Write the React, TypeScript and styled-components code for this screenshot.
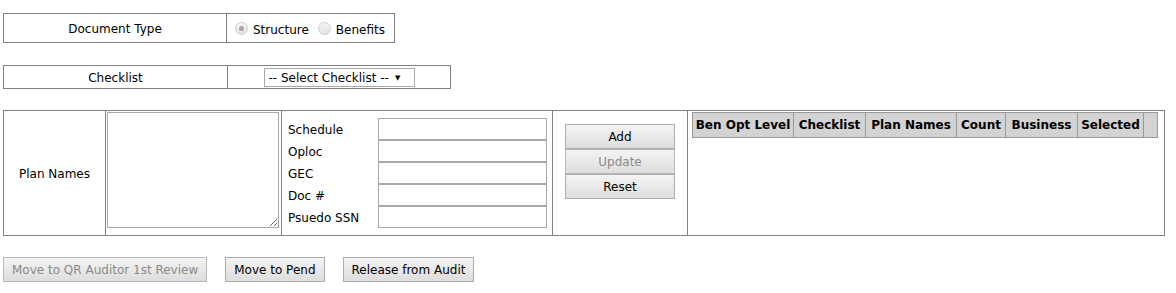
import styled, { createGlobalStyle } from "styled-components";

const GlobalStyle = createGlobalStyle`
  html, body {
    margin: 0;
    padding: 0;
    background: #fff;
  }

  body {
    font-family: "DejaVu Sans", Verdana, sans-serif;
    font-size: 12px;
    color: #000;
  }

  * {
    box-sizing: border-box;
  }
`;

const headers = [
  { label: "Ben Opt Level", width: 101 },
  { label: "Checklist", width: 72 },
  { label: "Plan Names", width: 91 },
  { label: "Count", width: 49 },
  { label: "Business", width: 72 },
  { label: "Selected", width: 66 },
  { label: "", width: 14 },
];

const fields = ["Schedule", "Oploc", "GEC", "Doc #", "Psuedo SSN"];

const App = () => (
  <>
    <GlobalStyle />
    <Page>
      <FormTable $cols="223px 1fr" $width={392} $height={30} $gap={22}>
        <LabelCell $shift={2}>Document Type</LabelCell>
        <RadioCell>
          <RadioOption>
            <Radio $checked />
            <RadioText>Structure</RadioText>
          </RadioOption>
          <RadioOption>
            <Radio />
            <RadioText>Benefits</RadioText>
          </RadioOption>
        </RadioCell>
      </FormTable>

      <FormTable $cols="224px 1fr" $width={448} $height={24} $gap={21}>
        <LabelCell $shift={1}>Checklist</LabelCell>
        <CenterCell>
          <SelectWrap>
            <Select defaultValue="">
              <option value="">-- Select Checklist --</option>
            </Select>
            <Arrow>▼</Arrow>
          </SelectWrap>
        </CenterCell>
      </FormTable>

      <FormTable
        $cols="102px 176px 271px 135px 1fr"
        $width={1162}
        $height={126}
        $gap={21}
      >
        <LabelCell $shift={1}>Plan Names</LabelCell>
        <TextareaCell>
          <PlanNames />
        </TextareaCell>
        <FieldsCell>
          <FieldGrid>
            {fields.map((f) => (
              <FieldRow key={f}>
                <FieldLabel>{f}</FieldLabel>
                <Input type="text" />
              </FieldRow>
            ))}
          </FieldGrid>
        </FieldsCell>
        <ButtonCell>
          <StackButton>Add</StackButton>
          <StackButton disabled>Update</StackButton>
          <StackButton>Reset</StackButton>
        </ButtonCell>
        <GridCell>
          <HeaderRow>
            {headers.map((h, i) => (
              <HeadCell key={i} $width={h.width}>
                {h.label}
              </HeadCell>
            ))}
          </HeaderRow>
        </GridCell>
      </FormTable>

      <Actions>
        <Button disabled>Move to QR Auditor 1st Review</Button>
        <Button>Move to Pend</Button>
        <Button>Release from Audit</Button>
      </Actions>
    </Page>
  </>
);

const Page = styled.div`
  display: flex;
  flex-direction: column;
  align-items: flex-start;
  padding: 13px 0 0 3px;
`;

const FormTable = styled.div<{
  $cols: string;
  $width: number;
  $height: number;
  $gap: number;
}>`
  display: grid;
  grid-template-columns: ${(p) => p.$cols};
  width: ${(p) => p.$width}px;
  height: ${(p) => p.$height}px;
  margin-bottom: ${(p) => p.$gap}px;
  border: 1px solid #808080;
`;

const Cell = styled.div`
  display: flex;
  border-right: 1px solid #808080;
  min-width: 0;

  &:last-child {
    border-right: none;
  }
`;

const LabelCell = styled(Cell)<{ $shift?: number }>`
  align-items: center;
  justify-content: center;
  padding-top: ${(p) => p.$shift ?? 0}px;
`;

const CenterCell = styled(Cell)`
  align-items: center;
  justify-content: center;
`;

const RadioCell = styled(Cell)`
  align-items: center;
  gap: 9px;
  padding-left: 8px;
`;

const RadioOption = styled.label`
  display: flex;
  align-items: center;
  gap: 5px;
  color: #000;
`;

const RadioText = styled.span`
  padding-top: 4px;
`;

const Radio = styled.span<{ $checked?: boolean }>`
  display: inline-flex;
  align-items: center;
  justify-content: center;
  width: 13px;
  height: 13px;
  border-radius: 50%;
  border: 1px solid #cdcdcd;
  background: linear-gradient(#f6f6f6, #e3e3e3);

  &::after {
    content: "";
    width: 5px;
    height: 5px;
    border-radius: 50%;
    background: ${(p) => (p.$checked ? "#a3a3a3" : "transparent")};
  }
`;

const SelectWrap = styled.div`
  position: relative;
  width: 151px;
  height: 19px;
`;

const Select = styled.select`
  appearance: none;
  width: 100%;
  height: 100%;
  margin: 0;
  padding: 1px 0 0 4px;
  border: 1px solid #a9a9a9;
  border-radius: 0;
  background: #fff;
  font: inherit;
  color: #000;
`;

const Arrow = styled.span`
  position: absolute;
  top: 5px;
  right: 14px;
  font-size: 7px;
  line-height: 10px;
  color: #000;
  pointer-events: none;
`;

const TextareaCell = styled(Cell)`
  align-items: flex-start;
  padding: 1px 0 0 1px;
`;

const PlanNames = styled.textarea`
  display: block;
  width: 172px;
  height: 116px;
  margin: 0;
  padding: 2px;
  border: 1px solid #a9a9a9;
  font: inherit;
  resize: both;
`;

const FieldsCell = styled(Cell)`
  align-items: center;
  padding-left: 6px;
`;

const FieldGrid = styled.div`
  display: flex;
  flex-direction: column;
`;

const FieldRow = styled.div`
  display: grid;
  grid-template-columns: 90px 169px;
  align-items: center;
  height: 22px;
`;

const FieldLabel = styled.span`
  white-space: nowrap;
  padding-top: 1px;
`;

const Input = styled.input`
  width: 169px;
  height: 22px;
  margin: 0;
  padding: 0 2px;
  border: 1px solid #a9a9a9;
  font: inherit;
`;

const ButtonCell = styled(Cell)`
  flex-direction: column;
  align-items: center;
  padding-top: 13px;
`;

const Button = styled.button`
  height: 25px;
  margin: 0;
  padding: 1px 8px 0;
  border: 1px solid #acacac;
  border-radius: 0;
  background: linear-gradient(#f4f4f4, #dddddd);
  font: inherit;
  color: #000;
  white-space: nowrap;

  &:disabled {
    color: #8a8a8a;
    border-color: #b8b8b8;
  }
`;

const StackButton = styled(Button)`
  width: 110px;
`;

const GridCell = styled(Cell)`
  align-items: flex-start;
  padding: 1px 0 0 4px;
`;

const HeaderRow = styled.div`
  display: flex;
  height: 26px;
  border: 1px solid #999;
  border-right: none;
  background: #d3d3d3;
`;

const HeadCell = styled.div<{ $width: number }>`
  display: flex;
  align-items: center;
  justify-content: center;
  width: ${(p) => p.$width}px;
  border-right: 1px solid #999;
  font-weight: bold;
  white-space: nowrap;
`;

const Actions = styled.div`
  display: flex;
  gap: 18px;
`;

export default App;
